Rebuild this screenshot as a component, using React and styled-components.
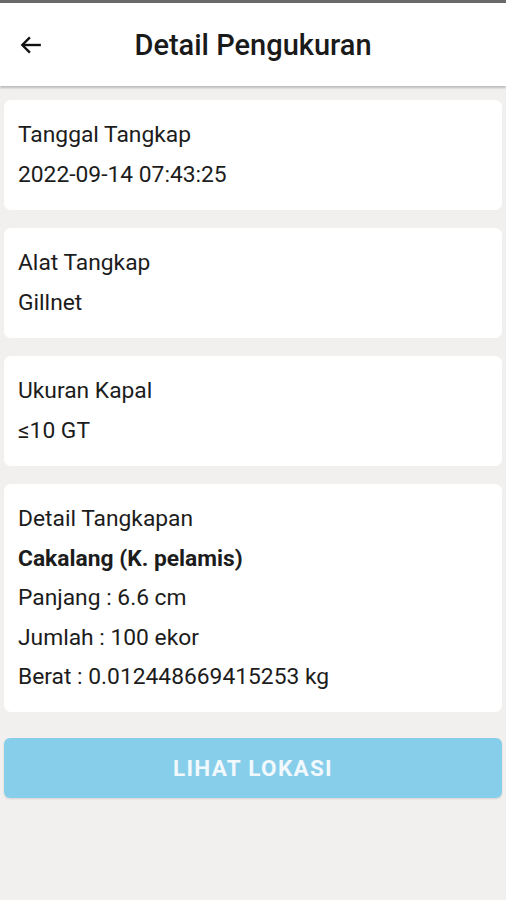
import styled, { createGlobalStyle } from "styled-components";

const Global = createGlobalStyle`
  html, body {
    margin: 0;
    padding: 0;
    background: #f2f0ee;
    font-family: Roboto, "Noto Sans", "Liberation Sans", sans-serif;
  }
`

const Screen = styled.div`
  width: 506px;
  min-height: 900px;
  background: #f2f0ee;
  border-top: 3px solid #6a6a6a;
  box-sizing: border-box;
`

const Header = styled.header`
  height: 83px;
  background: #fff;
  display: flex;
  align-items: center;
  position: relative;
  box-shadow: 0 2px 2px rgba(0, 0, 0, 0.22);
`

const Back = styled.button`
  border: 0;
  background: none;
  padding: 0;
  margin-left: 17px;
  width: 28px;
  height: 28px;
  display: flex;
  align-items: center;
  justify-content: center;
  color: #111;
`

const Title = styled.h1`
  flex: 1;
  margin: 0 0 0 -45px;
  text-align: center;
  font-size: 29px;
  font-weight: 500;
  color: #1a1a1a;
`

const Content = styled.main`
  display: flex;
  flex-direction: column;
  gap: 18px;
  padding: 14px 4px 0;
`

const Card = styled.section`
  background: #fff;
  border-radius: 7px;
  padding: 22px 14px 18px;
  display: flex;
  flex-direction: column;
  gap: 13.5px;
  min-height: ${(p) => p.$min || 0}px;
  box-sizing: border-box;
`

const Line = styled.div`
  font-size: 22.8px;
  line-height: 26px;
  color: #1c1c1c;
  font-weight: ${(p) => (p.$bold ? 700 : 400)};
`

const Button = styled.button`
  margin-top: 8px;
  height: 60px;
  border: 0;
  border-radius: 6px;
  background: #87ceeb;
  color: #f1f9fd;
  font-family: Roboto, "Liberation Sans", sans-serif;
  font-size: 22.5px;
  font-weight: 700;
  letter-spacing: 1.3px;
  box-shadow: 0 1px 2px rgba(0, 0, 0, 0.12);
`

export default function App() {
  return (
    <Screen>
      <Global />
      <Header>
        <Back aria-label="back">
          <svg width="26" height="26" viewBox="0 0 24 24" fill="none" stroke="currentColor" strokeWidth="2.2" strokeLinecap="square">
            <path d="M20 12H5" />
            <path d="M11 5l-7 7 7 7" strokeLinecap="butt" />
          </svg>
        </Back>
        <Title>Detail Pengukuran</Title>
      </Header>
      <Content>
        <Card $min={110}>
          <Line>Tanggal Tangkap</Line>
          <Line>2022-09-14 07:43:25</Line>
        </Card>
        <Card $min={110}>
          <Line>Alat Tangkap</Line>
          <Line>Gillnet</Line>
        </Card>
        <Card $min={110}>
          <Line>Ukuran Kapal</Line>
          <Line>≤10 GT</Line>
        </Card>
        <Card $min={228}>
          <Line>Detail Tangkapan</Line>
          <Line $bold>Cakalang (K. pelamis)</Line>
          <Line>Panjang : 6.6 cm</Line>
          <Line>Jumlah : 100 ekor</Line>
          <Line>Berat : 0.012448669415253 kg</Line>
        </Card>
        <Button>LIHAT LOKASI</Button>
      </Content>
    </Screen>
  );
}
